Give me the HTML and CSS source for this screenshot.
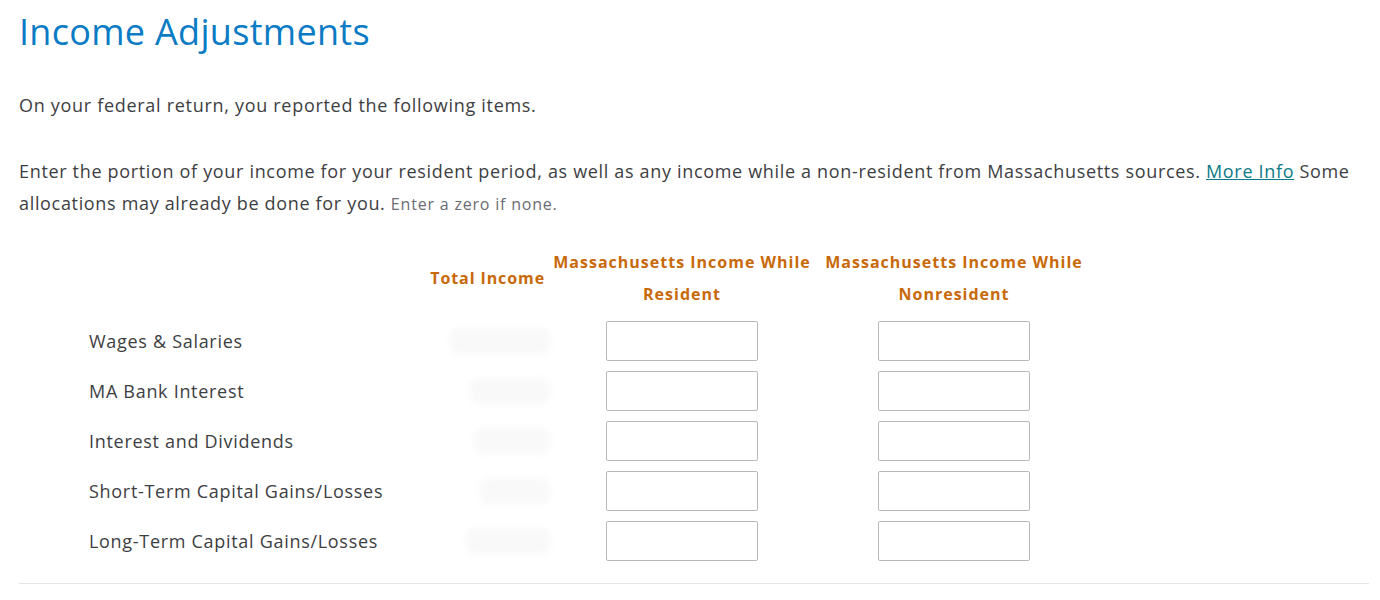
FILE: index.html
```html
<!DOCTYPE html>
<html lang="en">
<head>
<meta charset="utf-8">
<title>Income Adjustments</title>
<link rel="stylesheet" href="styles.css">
</head>
<body>
<main class="page">
  <h1 class="title">Income Adjustments</h1>
  <p class="intro">On your federal return, you reported the following items.</p>
  <p class="instructions">Enter the portion of your income for your resident period, as well as any income while a non-resident from Massachusetts sources. <a href="#" class="link">More Info</a> Some allocations may already be done for you. <span class="hint">Enter a zero if none.</span></p>

  <div class="grid">
    <div class="head head-label"></div>
    <div class="head head-total">Total Income</div>
    <div class="head">Massachusetts Income While Resident</div>
    <div class="head">Massachusetts Income While Nonresident</div>

    <div class="label">Wages &amp; Salaries</div>
    <div class="total"><span class="blur" style="width:100px"></span></div>
    <div class="cell"><input class="field" type="text"></div>
    <div class="cell"><input class="field" type="text"></div>

    <div class="label">MA Bank Interest</div>
    <div class="total"><span class="blur" style="width:80px"></span></div>
    <div class="cell"><input class="field" type="text"></div>
    <div class="cell"><input class="field" type="text"></div>

    <div class="label">Interest and Dividends</div>
    <div class="total"><span class="blur" style="width:76px"></span></div>
    <div class="cell"><input class="field" type="text"></div>
    <div class="cell"><input class="field" type="text"></div>

    <div class="label">Short-Term Capital Gains/Losses</div>
    <div class="total"><span class="blur" style="width:70px"></span></div>
    <div class="cell"><input class="field" type="text"></div>
    <div class="cell"><input class="field" type="text"></div>

    <div class="label">Long-Term Capital Gains/Losses</div>
    <div class="total"><span class="blur" style="width:84px"></span></div>
    <div class="cell"><input class="field" type="text"></div>
    <div class="cell"><input class="field" type="text"></div>
  </div>
  <hr class="rule">
</main>
</body>
</html>
```
FILE: styles.css
```css
html, body {
  margin: 0;
  padding: 0;
  background: #ffffff;
}
body {
  font-family: "Open Sans", "Noto Sans", sans-serif;
  color: #3d3e42;
}
.page {
  padding: 10px 11px 0 19px;
}
.title {
  margin: 0;
  font-size: 36px;
  line-height: 44px;
  font-weight: 400;
  letter-spacing: 0.3px;
  color: #0a7bc4;
}
.intro {
  margin: 35px 0 0;
  font-size: 18px;
  line-height: 32px;
  letter-spacing: 0.7px;
}
.instructions {
  margin: 34px 0 0;
  font-size: 18px;
  line-height: 32px;
  letter-spacing: 0.67px;
}
.link {
  color: #0d7a87;
  text-decoration: underline;
}
.hint {
  font-size: 16px;
  letter-spacing: 0.8px;
  color: #6b6c72;
}
.grid {
  margin-top: 26px;
  padding-left: 70px;
  display: grid;
  grid-template-columns: 341px 116px 272px 272px;
  grid-template-rows: 70px repeat(5, 50px);
}
.head {
  height: 64px;
  display: flex;
  align-items: center;
  justify-content: center;
  text-align: center;
  font-size: 16px;
  line-height: 32px;
  font-weight: 700;
  letter-spacing: 1px;
  color: #c8690a;
  align-self: start;
}
.head-total {
  justify-content: flex-end;
  padding-right: 1px;
  letter-spacing: 0.9px;
}
.label {
  display: flex;
  align-items: center;
  font-size: 18px;
  letter-spacing: 0.7px;
}
.total {
  display: flex;
  align-items: center;
  justify-content: flex-end;
  margin-right: -4px;
}
.blur {
  display: block;
  height: 26px;
  background: #f9f9f9;
  border-radius: 8px;
  filter: blur(3px);
}
.cell {
  display: flex;
  align-items: center;
  justify-content: center;
}
.field {
  box-sizing: border-box;
  width: 152px;
  height: 40px;
  border: 1px solid #b9b9b9;
  border-radius: 2px;
  background: #fff;
  margin: 0;
}
.rule {
  margin: 17px 0 0;
  border: 0;
  border-top: 1px solid #e5e5e5;
}
```
